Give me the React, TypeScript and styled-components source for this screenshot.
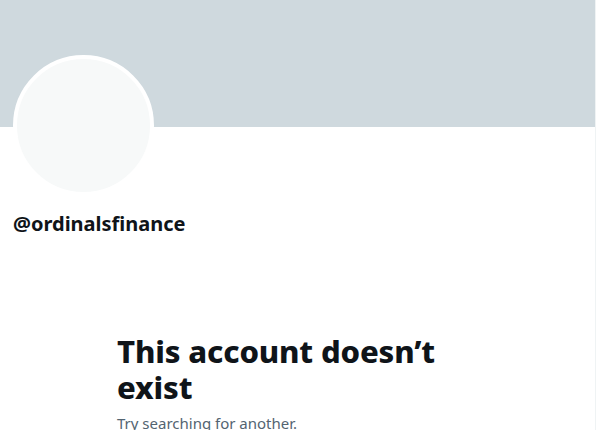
import React from "react";
import styled, { createGlobalStyle } from "styled-components";

const Global = createGlobalStyle`
  html, body {
    margin: 0;
    padding: 0;
    background: #ffffff;
  }
  body {
    font-family: "Noto Sans", "DejaVu Sans", sans-serif;
    color: #0f1419;
  }
`;

const Column = styled.div`
  width: 595px;
  min-height: 430px;
  border-right: 1px solid #eff3f4;
  overflow: hidden;
`;

const Banner = styled.div`
  height: 127px;
  background: #cfd9de;
`;

const ProfileHead = styled.div`
  padding: 0 16px 0 13px;
`;

const Avatar = styled.div`
  width: 133px;
  height: 133px;
  margin-top: -72px;
  border: 4px solid #ffffff;
  border-radius: 50%;
  background: #f7f9f9;
`;

const Handle = styled.div`
  margin-top: 16px;
  font-size: 20px;
  font-weight: 700;
  line-height: 24px;
`;

const Empty = styled.div`
  width: 361px;
  margin: 97px auto 0;
`;

const Title = styled.h1`
  margin: 0;
  font-size: 31px;
  font-weight: 800;
  line-height: 36px;
  letter-spacing: -0.15px;
`;

const Subtitle = styled.p`
  margin: 8px 0 0;
  font-size: 15px;
  line-height: 20px;
  color: #536471;
`;

export default function App() {
  return (
    <>
      <Global />
      <Column>
        <Banner />
        <ProfileHead>
          <Avatar />
          <Handle>@ordinalsfinance</Handle>
        </ProfileHead>
        <Empty>
          <Title>This account doesn’t exist</Title>
          <Subtitle>Try searching for another.</Subtitle>
        </Empty>
      </Column>
    </>
  );
}
